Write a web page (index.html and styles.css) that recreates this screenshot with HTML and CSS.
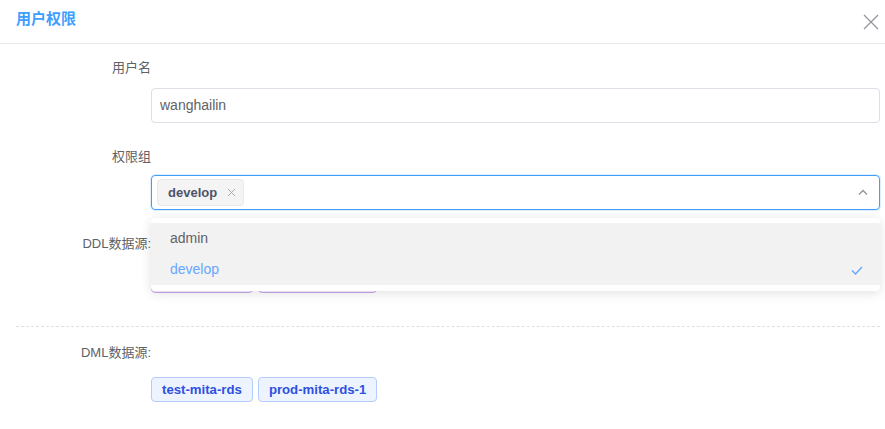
FILE: index.html
```html
<!DOCTYPE html>
<html lang="zh">
<head>
<meta charset="utf-8">
<link rel="stylesheet" href="styles.css">
</head>
<body>
<div class="dialog">
  <div class="header">
    <div class="title">用户权限</div>
    <svg class="close" width="16" height="16" viewBox="0 0 16 16"><path d="M1 1L15 15M15 1L1 15" stroke="#909399" stroke-width="1.2" fill="none"/></svg>
  </div>
  <div class="body">
    <div class="label">用户名</div>
    <div class="field">
      <div class="input">wanghailin</div>
    </div>
    <div class="label">权限组</div>
    <div class="field field-select">
      <div class="select">
        <span class="stag">develop<svg class="tagx" width="9" height="9" viewBox="0 0 9 9"><path d="M1 1L8 8M8 1L1 8" stroke="#a8abb2" stroke-width="1" fill="none"/></svg></span>
        <svg class="arrow" width="10" height="6" viewBox="0 0 10 6"><path d="M1 5.5L5 1.5L9 5.5" stroke="#909399" stroke-width="1.3" fill="none"/></svg>
        <div class="dropdown">
          <div class="opt">admin</div>
          <div class="opt sel">develop<svg class="check" width="12" height="9" viewBox="0 0 12 9"><path d="M1 4.5L4.5 8L11 1" stroke="#66a6ff" stroke-width="1.4" fill="none"/></svg></div>
        </div>
      </div>
    </div>
    <div class="label">DDL数据源:</div>
    <div class="field tags">
      <span class="tag purple">test-mita-rds</span>
      <span class="tag purple">prod-mita-rds-1</span>
    </div>
    <div class="divider"></div>
    <div class="label">DML数据源:</div>
    <div class="field tags">
      <span class="tag blue">test-mita-rds</span>
      <span class="tag blue">prod-mita-rds-1</span>
    </div>
  </div>
</div>
</body>
</html>
```
FILE: styles.css
```css
* { box-sizing: border-box; }
html, body { margin: 0; padding: 0; background: #fff; }
body {
  font-family: "Liberation Sans", "Noto Sans CJK SC", sans-serif;
  color: #606266;
  width: 885px;
  height: 429px;
  overflow: hidden;
}
.header {
  height: 44px;
  border-bottom: 1px solid #e8e8e8;
  display: flex;
  align-items: center;
  justify-content: space-between;
  padding: 0 6px 0 16px;
}
.title {
  font-size: 15px;
  font-weight: bold;
  color: #409eff;
  margin-top: -8px;
}
.close { margin-top: 1px; }
.body { padding: 14px 5px 0 16px; }
.label {
  width: 135px;
  text-align: right;
  font-size: 13px;
  line-height: 20px;
  color: #606266;
  white-space: nowrap;
}
.field {
  margin-left: 135px;
  margin-top: 10px;
  margin-bottom: 24px;
}
.field-select { margin-top: 8px; }
.input {
  height: 35px;
  border: 1px solid #dcdfe6;
  border-radius: 4px;
  padding: 0 8px;
  font-size: 14px;
  line-height: 33px;
  color: #606266;
}
.select {
  position: relative;
  height: 35px;
  border: 1px solid #409eff;
  box-shadow: 0 0 0 1px rgba(64,158,255,0.18);
  border-radius: 4px;
  padding: 3px 5px;
  display: flex;
  align-items: center;
}
.stag {
  display: inline-flex;
  align-items: center;
  height: 27px;
  padding: 0 7px 0 10px;
  background: #f4f4f5;
  border: 1px solid #e9e9eb;
  border-radius: 4px;
  font-size: 13px;
  font-weight: bold;
  color: #4e5369;
}
.tagx { margin-left: 10px; }
.arrow { position: absolute; right: 11px; top: 13px; }
.dropdown {
  position: absolute;
  left: -1px;
  right: -1px;
  top: 42px;
  background: #fff;
  border-radius: 4px;
  box-shadow: 0 2px 12px rgba(0,0,0,0.12);
  padding: 5px 0 6px;
  z-index: 10;
}
.opt {
  position: relative;
  height: 31px;
  line-height: 31px;
  padding: 0 19px;
  background: #f2f2f2;
  font-size: 14px;
  color: #606266;
}
.opt.sel { color: #66a6ff; }
.check { position: absolute; right: 17px; top: 12px; }
.tags {
  display: flex;
  gap: 5px;
  margin-top: 14px;
  margin-bottom: 0;
}
.tag {
  display: inline-block;
  height: 25px;
  line-height: 23px;
  padding: 0 10px;
  border-radius: 4px;
  font-size: 13.2px;
  font-weight: bold;
}
.tag.blue {
  background: #eef4ff;
  border: 1px solid #b3ccff;
  color: #2d50e0;
}
.tag.purple {
  background: #f6effe;
  border: 1px solid #c9a9ee;
  color: #8543e0;
}
.divider {
  border-top: 1px dashed #e0e0e0;
  margin: 33px 0 16px;
}
```
